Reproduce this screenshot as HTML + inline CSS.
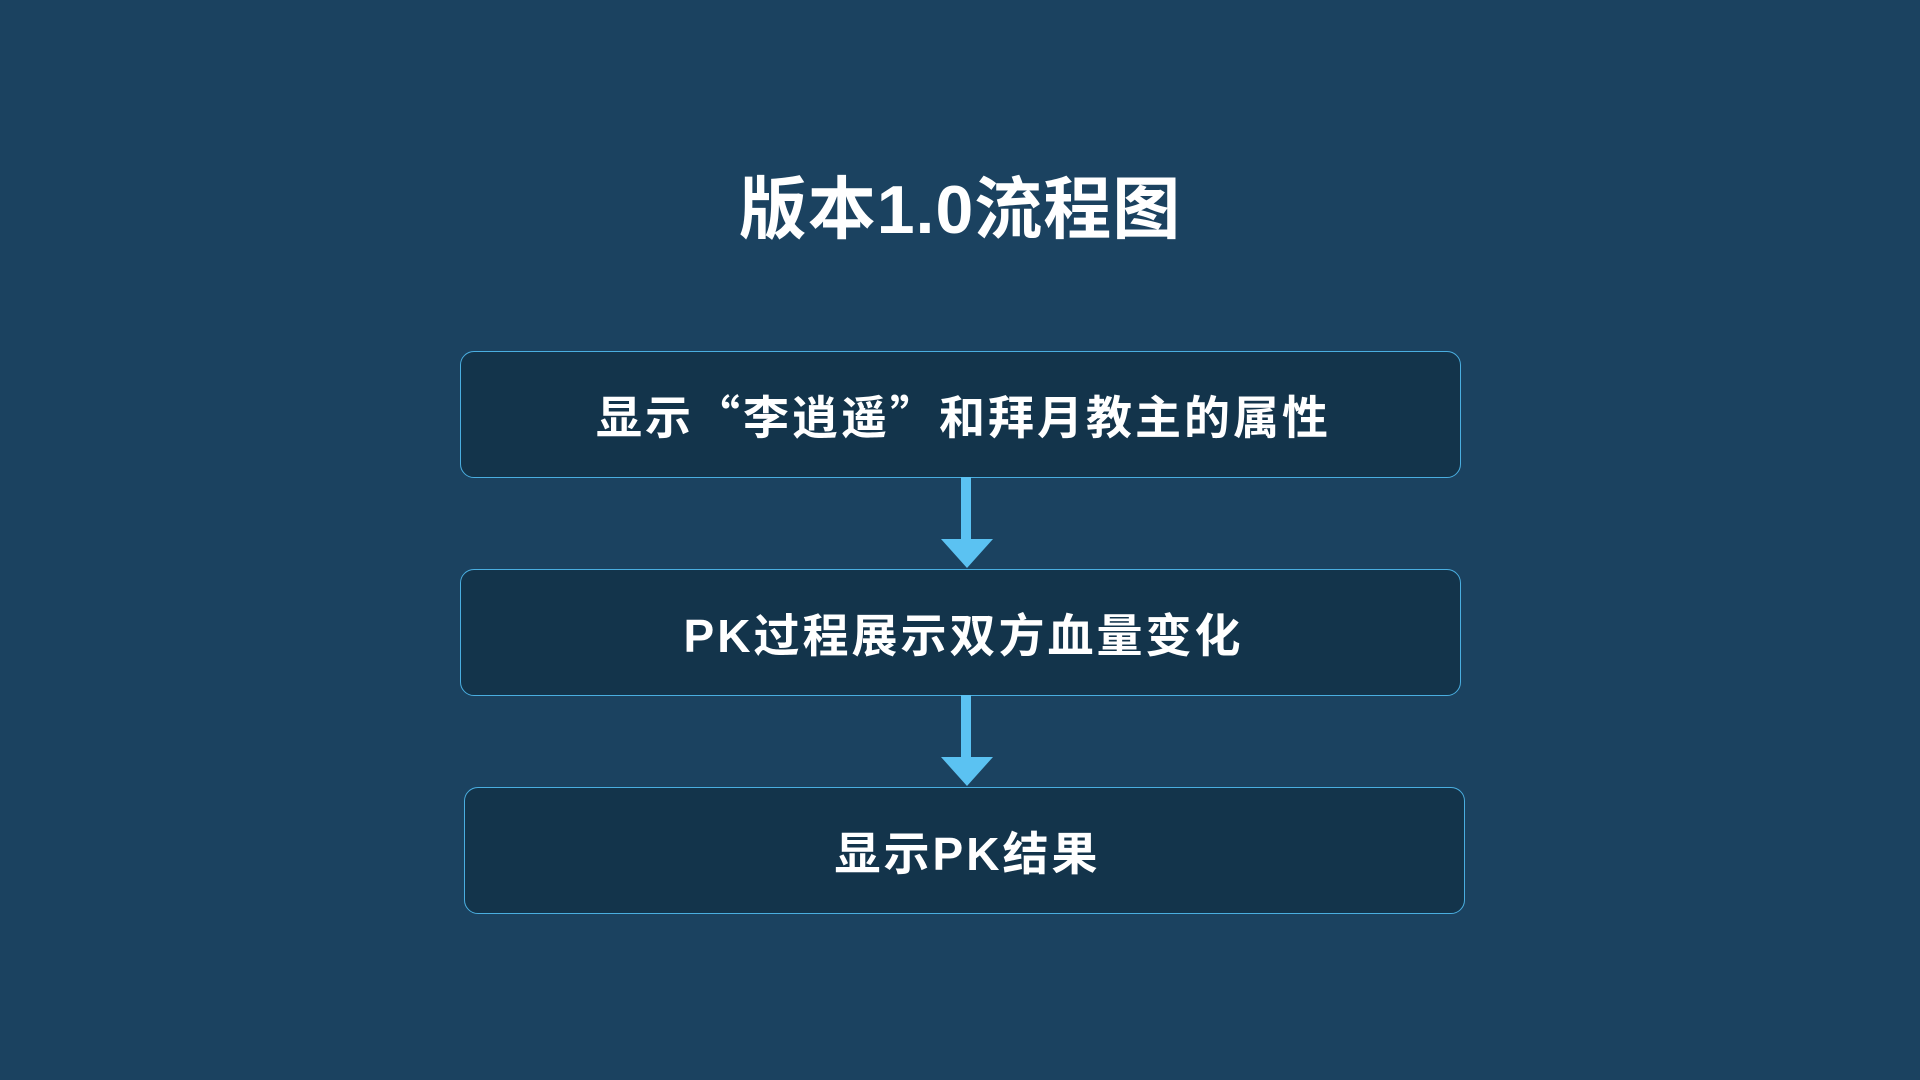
<!DOCTYPE html>
<html><head><meta charset="utf-8"><style>
html,body{margin:0;padding:0}
body{width:1920px;height:1080px;background:#1b4260;position:relative;overflow:hidden;font-family:"Liberation Sans","Noto Sans CJK SC",sans-serif;color:#fff}
.title{position:absolute;left:0;width:1920px;top:165px;text-align:center;font-size:68px;font-weight:bold;line-height:90px;letter-spacing:1px}
.box{position:absolute;width:1001px;height:127px;background:#13344b;border:1.5px solid #4aaee0;border-radius:14px;box-sizing:border-box;display:flex;align-items:center;justify-content:center;font-size:46px;font-weight:bold;letter-spacing:3px;padding-left:6px}
.q{font-family:"Noto Sans CJK SC",sans-serif}
.shaft{position:absolute;left:961px;width:10px;background:#5bc2f2}
.head{position:absolute;left:941px;width:0;height:0;border-left:26px solid transparent;border-right:26px solid transparent;border-top:29px solid #5bc2f2}
</style></head><body>
<div class="title">版本1.0流程图</div>
<div class="box" style="left:460px;top:351px">显示<span class="q">“</span>李逍遥<span class="q">”</span>和拜月教主的属性</div>
<div class="shaft" style="top:477px;height:63px"></div>
<div class="head" style="top:539px"></div>
<div class="box" style="left:460px;top:569px">PK过程展示双方血量变化</div>
<div class="shaft" style="top:695px;height:63px"></div>
<div class="head" style="top:757px"></div>
<div class="box" style="left:464px;top:787px">显示PK结果</div>
</body></html>
